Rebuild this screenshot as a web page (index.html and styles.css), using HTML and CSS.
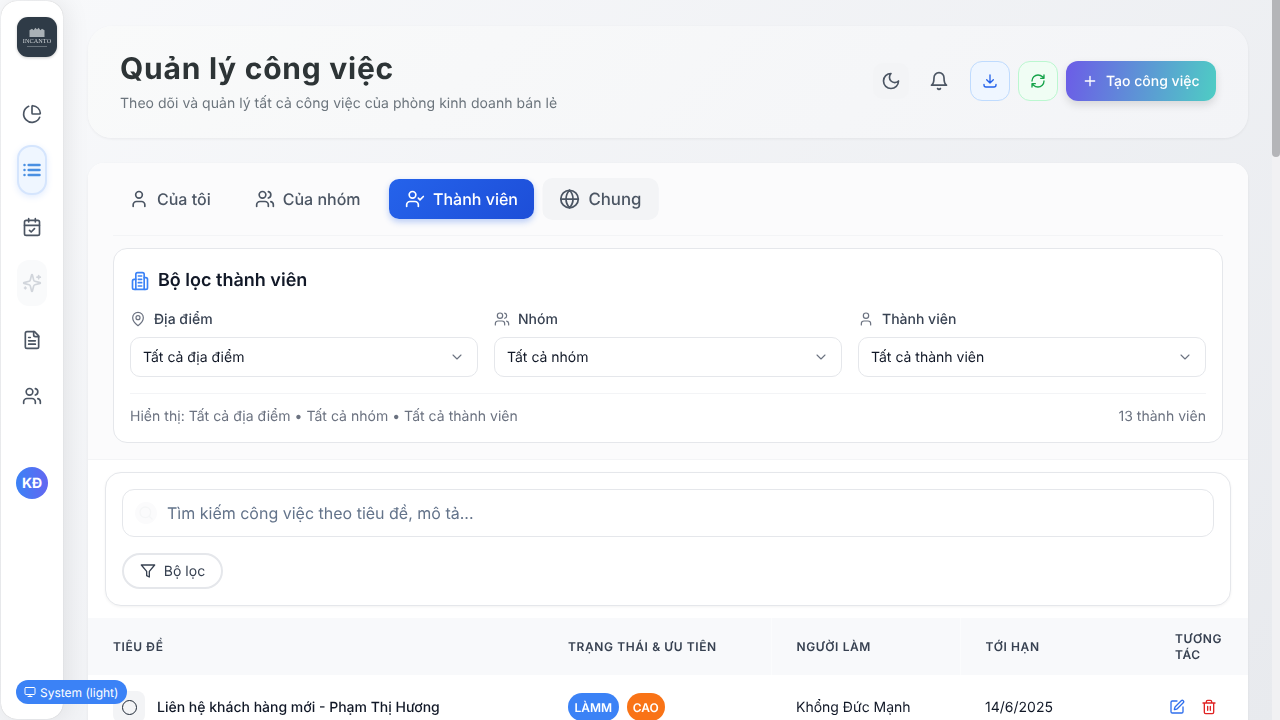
FILE: index.html
```html
<!DOCTYPE html>
<html lang="vi">
<head>
<meta charset="utf-8">
<title>Quản lý công việc</title>
<link rel="stylesheet" href="styles.css">
</head>
<body>
<svg class="sprite" aria-hidden="true">
  <symbol id="i-pie" viewBox="0 0 24 24"><path d="M21 12c.552 0 1.005-.449.95-.998a10 10 0 0 0-8.953-8.951c-.55-.055-.998.398-.998.95v8a1 1 0 0 0 1 1z"/><path d="M21.21 15.89A10 10 0 1 1 8 2.83"/></symbol>
  <symbol id="i-list" viewBox="0 0 24 24"><path d="M8 6h13M8 12h13M8 18h13M3 6h.01M3 12h.01M3 18h.01"/></symbol>
  <symbol id="i-cal" viewBox="0 0 24 24"><path d="M8 2v4M16 2v4"/><rect width="18" height="18" x="3" y="4" rx="2"/><path d="M3 10h18M9 16l2 2 4-4"/></symbol>
  <symbol id="i-spark" viewBox="0 0 24 24"><path d="M9.937 15.5A2 2 0 0 0 8.5 14.063l-6.135-1.582a.5.5 0 0 1 0-.962L8.5 9.936A2 2 0 0 0 9.937 8.5l1.582-6.135a.5.5 0 0 1 .963 0L14.063 8.5A2 2 0 0 0 15.5 9.937l6.135 1.581a.5.5 0 0 1 0 .964L15.5 14.063a2 2 0 0 0-1.437 1.437l-1.582 6.135a.5.5 0 0 1-.963 0zM20 3v4M22 5h-4M4 17v2M5 18H3"/></symbol>
  <symbol id="i-doc" viewBox="0 0 24 24"><path d="M15 2H6a2 2 0 0 0-2 2v16a2 2 0 0 0 2 2h12a2 2 0 0 0 2-2V7Z"/><path d="M14 2v4a2 2 0 0 0 2 2h4M10 9H8M16 13H8M16 17H8"/></symbol>
  <symbol id="i-users" viewBox="0 0 24 24"><path d="M16 21v-2a4 4 0 0 0-4-4H6a4 4 0 0 0-4 4v2"/><circle cx="9" cy="7" r="4"/><path d="M22 21v-2a4 4 0 0 0-3-3.87M16 3.13a4 4 0 0 1 0 7.75"/></symbol>
  <symbol id="i-user" viewBox="0 0 24 24"><path d="M19 21v-2a4 4 0 0 0-4-4H9a4 4 0 0 0-4 4v2"/><circle cx="12" cy="7" r="4"/></symbol>
  <symbol id="i-ucheck" viewBox="0 0 24 24"><path d="M16 21v-2a4 4 0 0 0-4-4H6a4 4 0 0 0-4 4v2"/><circle cx="9" cy="7" r="4"/><path d="M16 11l2 2 4-4"/></symbol>
  <symbol id="i-globe" viewBox="0 0 24 24"><circle cx="12" cy="12" r="10"/><path d="M12 2a14.5 14.5 0 0 0 0 20 14.5 14.5 0 0 0 0-20M2 12h20"/></symbol>
  <symbol id="i-moon" viewBox="0 0 24 24"><path d="M12 3a6 6 0 0 0 9 9 9 9 0 1 1-9-9Z"/></symbol>
  <symbol id="i-bell" viewBox="0 0 24 24"><path d="M6 8a6 6 0 0 1 12 0c0 7 3 9 3 9H3s3-2 3-9M10.3 21a1.94 1.94 0 0 0 3.4 0"/></symbol>
  <symbol id="i-down" viewBox="0 0 24 24"><path d="M12 15V3M7 10l5 5 5-5M3 17v1a3 3 0 0 0 3 3h12a3 3 0 0 0 3-3v-1"/></symbol>
  <symbol id="i-refresh" viewBox="0 0 24 24"><path d="M3 12a9 9 0 0 1 9-9 9.75 9.75 0 0 1 6.74 2.74L21 8M21 3v5h-5M21 12a9 9 0 0 1-9 9 9.75 9.75 0 0 1-6.74-2.74L3 16M8 16H3v5"/></symbol>
  <symbol id="i-plus" viewBox="0 0 24 24"><path d="M5 12h14M12 5v14"/></symbol>
  <symbol id="i-building" viewBox="0 0 24 24"><path d="M7 22V4a2 2 0 0 1 2-2h6a2 2 0 0 1 2 2v18Z"/><path d="M7 10H5a2 2 0 0 0-2 2v8a2 2 0 0 0 2 2h2M17 8h2a2 2 0 0 1 2 2v10a2 2 0 0 1-2 2h-2M10 6h4M10 10h4M10 14h4M10 18h4"/></symbol>
  <symbol id="i-pin" viewBox="0 0 24 24"><path d="M20 10c0 6-8 12-8 12s-8-6-8-12a8 8 0 0 1 16 0Z"/><circle cx="12" cy="10" r="3"/></symbol>
  <symbol id="i-chev" viewBox="0 0 24 24"><path d="M6 9l6 6 6-6"/></symbol>
  <symbol id="i-search" viewBox="0 0 24 24"><circle cx="11" cy="11" r="8"/><path d="M21 21l-4.3-4.3"/></symbol>
  <symbol id="i-filter" viewBox="0 0 24 24"><path d="M22 3H2l8 9.46V19l4 2v-8.54Z"/></symbol>
  <symbol id="i-monitor" viewBox="0 0 24 24"><rect width="20" height="14" x="2" y="3" rx="2"/><path d="M8 21h8M12 17v4"/></symbol>
  <symbol id="i-edit" viewBox="0 0 24 24"><path d="M12 3H5a2 2 0 0 0-2 2v14a2 2 0 0 0 2 2h14a2 2 0 0 0 2-2v-7"/><path d="M18.375 2.625a1 1 0 0 1 3 3l-9.013 9.014a2 2 0 0 1-.853.505l-2.873.84a.5.5 0 0 1-.62-.62l.84-2.873a2 2 0 0 1 .506-.852z"/></symbol>
  <symbol id="i-trash" viewBox="0 0 24 24"><path d="M3 6h18M19 6v14c0 1-1 2-2 2H7c-1 0-2-1-2-2V6M8 6V4c0-1 1-2 2-2h4c1 0 2 1 2 2v2M10 11v6M14 11v6"/></symbol>
</svg>

<aside class="sidebar">
  <div class="logo">
    <svg class="logo-crest" viewBox="0 0 24 12"><path d="M3 12V4l3-2 2 2 2-3 2 2 2-2 2 3 2-2 3 2v8Z"/></svg>
    <span class="logo-name">INCANTO</span>
    <span class="logo-rule"></span>
  </div>
  <nav class="side-nav">
    <a class="side-item"><svg class="ic ic-20"><use href="#i-pie"/></svg></a>
    <a class="side-item side-active"><svg class="ic ic-20"><use href="#i-list"/></svg></a>
    <a class="side-item"><svg class="ic ic-20"><use href="#i-cal"/></svg></a>
    <a class="side-item side-muted"><svg class="ic ic-20"><use href="#i-spark"/></svg></a>
    <a class="side-item"><svg class="ic ic-20"><use href="#i-doc"/></svg></a>
    <a class="side-item"><svg class="ic ic-20"><use href="#i-users"/></svg></a>
  </nav>
  <div class="avatar">KĐ</div>
</aside>

<div class="system-badge"><svg class="ic ic-12"><use href="#i-monitor"/></svg><span>System (light)</span></div>

<div class="scroll-track"><div class="scroll-thumb"></div></div>

<div class="scroller">
  <main class="content">
    <header class="page-head">
      <div class="page-title">
        <h1>Quản lý công việc</h1>
        <p>Theo dõi và quản lý tất cả công việc của phòng kinh doanh bán lẻ</p>
      </div>
      <div class="head-actions">
        <button class="icon-btn icon-soft"><svg class="ic ic-20"><use href="#i-moon"/></svg></button>
        <button class="icon-btn"><svg class="ic ic-20"><use href="#i-bell"/></svg></button>
        <button class="tool-btn tool-blue"><svg class="ic ic-16"><use href="#i-down"/></svg></button>
        <button class="tool-btn tool-green"><svg class="ic ic-16"><use href="#i-refresh"/></svg></button>
        <button class="create-btn"><svg class="ic ic-16"><use href="#i-plus"/></svg><span>Tạo công việc</span></button>
      </div>
    </header>

    <section class="board">
      <div class="board-top">
        <div class="tabs">
          <button class="tab"><svg class="ic ic-20"><use href="#i-user"/></svg>Của tôi</button>
          <button class="tab"><svg class="ic ic-20"><use href="#i-users"/></svg>Của nhóm</button>
          <button class="tab tab-active"><svg class="ic ic-20"><use href="#i-ucheck"/></svg>Thành viên</button>
          <button class="tab tab-hover"><svg class="ic ic-20"><use href="#i-globe"/></svg>Chung</button>
        </div>
        <div class="filter-card">
          <h2 class="filter-title"><svg class="ic ic-20 ic-blue"><use href="#i-building"/></svg>Bộ lọc thành viên</h2>
          <div class="filter-grid">
            <div class="field">
              <label class="field-label"><svg class="ic ic-16"><use href="#i-pin"/></svg>Địa điểm</label>
              <div class="select"><span>Tất cả địa điểm</span><svg class="ic ic-16"><use href="#i-chev"/></svg></div>
            </div>
            <div class="field">
              <label class="field-label"><svg class="ic ic-16"><use href="#i-users"/></svg>Nhóm</label>
              <div class="select"><span>Tất cả nhóm</span><svg class="ic ic-16"><use href="#i-chev"/></svg></div>
            </div>
            <div class="field">
              <label class="field-label"><svg class="ic ic-16"><use href="#i-user"/></svg>Thành viên</label>
              <div class="select"><span>Tất cả thành viên</span><svg class="ic ic-16"><use href="#i-chev"/></svg></div>
            </div>
          </div>
          <div class="filter-foot">
            <span>Hiển thị: Tất cả địa điểm • Tất cả nhóm • Tất cả thành viên</span>
            <span>13 thành viên</span>
          </div>
        </div>
      </div>

      <div class="search-wrap">
        <div class="search-card">
          <div class="search-box">
            <span class="search-icon"><svg class="ic ic-16"><use href="#i-search"/></svg></span>
            <input class="search-input" type="text" placeholder="Tìm kiếm công việc theo tiêu đề, mô tả...">
          </div>
          <button class="filter-btn"><svg class="ic ic-16"><use href="#i-filter"/></svg>Bộ lọc</button>
        </div>
      </div>

      <table class="tasks">
        <colgroup>
          <col class="col-title"><col class="col-status"><col class="col-owner"><col class="col-due"><col class="col-act">
        </colgroup>
        <thead>
          <tr><th>Tiêu đề</th><th>Trạng thái &amp; ưu tiên</th><th>Người làm</th><th>Tới hạn</th><th>Tương tác</th></tr>
        </thead>
        <tbody>
          <tr>
            <td><div class="task-name"><span class="check-box"><span class="check-ring"></span></span>Liên hệ khách hàng mới - Phạm Thị Hương</div></td>
            <td><div class="badges"><span class="badge badge-blue">LÀMM</span><span class="badge badge-orange">CAO</span></div></td>
            <td>Khổng Đức Mạnh</td>
            <td>14/6/2025</td>
            <td><div class="row-acts"><svg class="ic ic-16 ic-blue2"><use href="#i-edit"/></svg><svg class="ic ic-16 ic-red"><use href="#i-trash"/></svg></div></td>
          </tr>
        </tbody>
      </table>
    </section>
  </main>
</div>
</body>
</html>
```
FILE: styles.css
```css
* { box-sizing: border-box; }
html, body { margin: 0; height: 100%; overflow: hidden; }
body {
  font-family: Inter, "Noto Sans", sans-serif;
  color: #111827;
  background: linear-gradient(135deg, #f8f9fb 0%, #e8eaee 100%);
  text-rendering: geometricPrecision;
}
button { font-family: inherit; cursor: pointer; text-rendering: geometricPrecision; }
.sprite { display: none; }
.ic { fill: none; stroke: currentColor; stroke-width: 2; stroke-linecap: round; stroke-linejoin: round; flex: none; display: block; }
.ic-12 { width: 12px; height: 12px; }
.ic-16 { width: 16px; height: 16px; }
.ic-20 { width: 20px; height: 20px; }
.ic-blue { color: #3b82f6; }
.ic-blue2 { color: #2f6fed; }
.ic-red { color: #e02424; }

/* sidebar */
.sidebar {
  position: fixed; left: 1px; top: 1px; bottom: 1px; width: 62px; z-index: 5;
  background: #fff; border-radius: 16px;
  box-shadow: 0 0 1px rgba(0,0,0,.25), 4px 0 24px rgba(0,0,0,.08);
  display: flex; flex-direction: column; align-items: center;
  padding-top: 16px;
}
.logo {
  width: 40px; height: 40px; border-radius: 11px; background: #2f3b47; margin-left: 10px;
  box-shadow: 0 1px 3px rgba(0,0,0,.2);
  display: flex; flex-direction: column; align-items: center; justify-content: center;
  color: #d8dcdf;
}
.logo-crest { width: 20px; height: 10px; fill: #aab1b6; margin-bottom: 1px; }
.logo-name { font-family: "Liberation Serif", serif; font-size: 6.2px; line-height: 7px; letter-spacing: .1px; }
.logo-rule { width: 20px; height: 1px; background: #69737c; margin-top: 1px; }
.side-nav { display: flex; flex-direction: column; gap: 10.1px; margin-top: 34px; align-items: center; }
.side-item {
  width: 30px; height: 46.4px; display: flex; align-items: center; justify-content: center;
  color: #4b5563; border-radius: 12px;
}
.side-active {
  height: 50px; margin: -2px 0; background: #eff6ff; border: 2px solid #d5e5fd; border-radius: 14px;
  color: #4a90e2; box-shadow: 0 2px 6px rgba(59,130,246,.15);
}
.side-active .ic { stroke-width: 3; }
.side-muted { background: #f9fafb; color: #d1d5db; }
.avatar {
  width: 32px; height: 32px; border-radius: 50%; margin-top: 48px;
  background: linear-gradient(90deg, #3b82f6, #6366f1);
  color: #fff; font-size: 14px; font-weight: 700;
  display: flex; align-items: center; justify-content: center;
}
.system-badge {
  position: fixed; left: 16px; top: 680px; height: 24px; width: 111px; z-index: 6;
  background: #3b82f6; color: #fff; border-radius: 12px; font-size: 12px;
  display: flex; align-items: center; gap: 4px; padding-left: 8px;
}

/* scrollbar overlay */
.scroll-track { position: fixed; right: 0; top: 0; bottom: 0; width: 8px; background: #f1f1f3; z-index: 4; }
.scroll-thumb { height: 157px; background: #b4b5b8; border-radius: 0 0 4px 4px; }

/* page */
.scroller { height: 100vh; overflow: hidden; }
.content { padding: 26px 32px 24px 88px; will-change: transform; }

/* header */
.page-head {
  height: 112px; padding: 0 32px; border-radius: 24px;
  background: linear-gradient(135deg, #f9fafa, #f3f4f7);
  box-shadow: 0 1px 3px rgba(0,0,0,.06);
  display: flex; align-items: center; justify-content: space-between;
}
.page-title { margin-bottom: 2px; }
.page-title h1 { margin: 0; font-size: 30px; line-height: 40px; font-weight: 700; color: #2d3436; letter-spacing: .75px; }
.page-title p { margin: 5px 0 0; font-size: 14px; line-height: 20px; color: #6c757d; letter-spacing: .035px; }
.head-actions { display: flex; align-items: center; gap: 8px; margin-bottom: 2px; }
.icon-btn {
  width: 36px; height: 36px; border: 0; border-radius: 10px; background: transparent; color: #4b5563;
  display: flex; align-items: center; justify-content: center; margin-right: 5px;
}
.icon-soft { background: #f3f4f6; margin-right: 4px; }
.tool-btn {
  width: 40px; height: 40px; border-radius: 12px; border: 1px solid;
  display: flex; align-items: center; justify-content: center;
}
.tool-blue { background: #eff6ff; border-color: #bfdbfe; color: #2563eb; }
.tool-green { background: #f0fdf4; border-color: #bbf7d0; color: #16a34a; }
.create-btn {
  width: 150px; height: 40px; border: 0; border-radius: 12px; color: #fff; font-size: 14px; font-weight: 500;
  background: linear-gradient(100deg, #6c5ce7, #4ecdc4);
  box-shadow: 0 4px 8px rgba(0,0,0,.12);
  display: flex; align-items: center; gap: 8px; padding-left: 16px;
}

/* board */
.board {
  margin-top: 25px; background: #fff; border-radius: 16px;
  box-shadow: 0 1px 3px rgba(0,0,0,.06); overflow: hidden;
}
.board-top { background: #fbfbfc; padding: 16px 25px; border-bottom: 1px solid #f3f4f6; height: 297px; }
.tabs { display: flex; align-items: center; gap: 12px; padding-bottom: 16px; border-bottom: 1px solid #f3f4f6; height: 57px; }
.tab {
  height: 40px; padding: 0 16px; border: 0; border-radius: 10px; background: transparent;
  color: #4b5563; font-size: 16px; font-weight: 500;
  display: flex; align-items: center; gap: 8px; white-space: nowrap;
}
.tab-active { background: linear-gradient(135deg, #2563eb, #1d4ed8); color: #fff; box-shadow: 0 3px 6px rgba(37,99,235,.3); padding: 0 16.5px; }
.tab-hover { background: #f3f4f6; transform: scale(1.05); margin-left: -1px; }
.filter-card {
  margin-top: 12px; height: 195px; background: #fff; border: 1px solid #e5e7eb; border-radius: 14px;
  padding: 17px 16px 16px;
}
.filter-title { margin: 0; height: 30px; font-size: 18px; line-height: 30px; font-weight: 600; color: #111827; display: flex; align-items: center; gap: 8px; }
.filter-grid { display: grid; grid-template-columns: repeat(3, 1fr); gap: 16px; margin-top: 13px; }
.field-label { display: flex; align-items: center; gap: 8px; height: 20px; font-size: 14px; font-weight: 500; color: #374151; }
.field-label .ic { color: #6b7280; stroke-width: 1.8; }
.select {
  margin-top: 8px; height: 40px; border: 1px solid #e5e7eb; border-radius: 10px; background: #fff;
  display: flex; align-items: center; justify-content: space-between; padding: 0 12px;
  font-size: 14px; color: #111827;
}
.select .ic { color: #6b7280; stroke-width: 1.6; }
.filter-foot {
  margin-top: 16px; padding-top: 13px; border-top: 1px solid #f3f4f6;
  display: flex; justify-content: space-between; font-size: 14px; line-height: 20px; color: #6b7280; letter-spacing: .03px;
}

/* search */
.search-wrap { padding: 12px 17px; height: 158px; }
.search-card {
  height: 134px; border: 1px solid #e5e7eb; border-radius: 16px; padding: 16px; background: #fff;
  box-shadow: 0 1px 3px rgba(0,0,0,.05);
}
.search-box {
  height: 48px; border: 1px solid #e5e7eb; border-radius: 12px; display: flex; align-items: center; padding-left: 12px; gap: 10px;
}
.search-icon { width: 22px; height: 22px; border-radius: 11px; background: #fbfbfc; color: #f5f6f7; display: flex; align-items: center; justify-content: center; }
.search-input { flex: 1; border: 0; outline: 0; background: transparent; font-family: inherit; font-size: 16px; color: #111827; padding: 0; text-rendering: geometricPrecision; }
.search-input::placeholder { color: #64748b; opacity: 1; }
.filter-btn {
  margin-top: 16px; height: 36px; width: 101px; border: 2px solid #e5e7eb; border-radius: 18px; background: #fff;
  color: #374151; font-size: 14px; display: flex; align-items: center; justify-content: center; gap: 8px;
}

/* table */
.tasks { width: 100%; table-layout: fixed; border-collapse: collapse; }
.col-title { width: 455px; }
.col-status { width: 228px; }
.col-owner { width: 189px; }
.col-due { width: 190px; }
.tasks th {
  height: 57px; padding: 0 25px; background: #f8f9fb; text-align: left;
  font-size: 12px; line-height: 16px; font-weight: 600; letter-spacing: .6px; text-transform: uppercase; color: #374151;
}
.tasks th:nth-child(2), .tasks th:nth-child(3) { border-right: 1px solid #fbfcfd; }
.tasks td { height: 64px; padding: 0 25px; font-size: 14px; color: #111827; vertical-align: middle; }
.task-name { display: flex; align-items: center; gap: 12px; font-weight: 500; }
.check-box { width: 32px; height: 32px; border-radius: 8px; background: #f3f4f6; display: flex; align-items: center; justify-content: center; }
.check-ring { width: 15px; height: 15px; border: 1.5px solid #1f2937; border-radius: 50%; }
.badges { display: flex; gap: 8px; }
.badge { height: 28px; border-radius: 14px; padding: 0 6.5px; color: #fff; font-size: 12px; font-weight: 600; display: flex; align-items: center; }
.badge-blue { background: #3b82f6; }
.badge-orange { background: #f97316; padding: 0 6px; }
.row-acts { display: flex; gap: 16px; margin-left: -6px; }
```
